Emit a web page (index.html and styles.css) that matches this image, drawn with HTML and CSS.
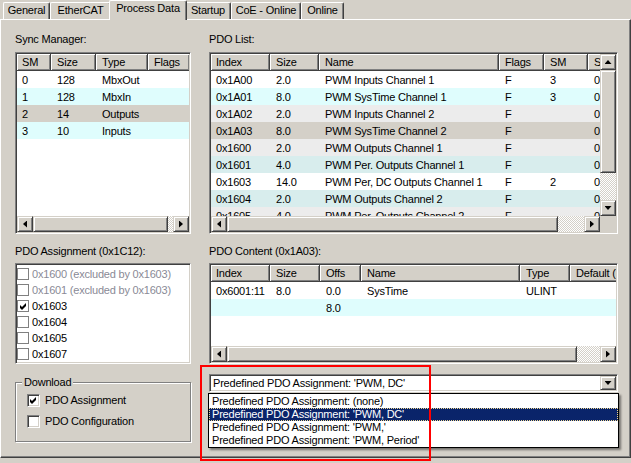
FILE: index.html
```html
<!DOCTYPE html>
<html>
<head>
<meta charset="utf-8">
<link rel="stylesheet" href="styles.css">
</head>
<body>
<div class="tabs">
  <div class="tab t1">General</div>
  <div class="tab t2">EtherCAT</div>
  <div class="tab t3 active">Process Data</div>
  <div class="tab t4">Startup</div>
  <div class="tab t5">CoE - Online</div>
  <div class="tab t6">Online</div>
</div>
<div class="panel">
  <div class="col left">
    <div class="label">Sync Manager:</div>
    <div class="sunken box big nov">
      <div class="view">
        <table class="lv sm-t">
          <colgroup><col class="c34"><col class="c45"><col class="c52"><col class="c42"><col class="c47"></colgroup>
          <tr><th>SM</th><th>Size</th><th>Type</th><th>Flags</th><th></th></tr>
          <tr class="r-w"><td>0</td><td>128</td><td>MbxOut</td><td></td><td></td></tr>
          <tr class="r-c"><td>1</td><td>128</td><td>MbxIn</td><td></td><td></td></tr>
          <tr class="r-s"><td>2</td><td>14</td><td>Outputs</td><td></td><td></td></tr>
          <tr class="r-c"><td>3</td><td>10</td><td>Inputs</td><td></td><td></td></tr>
        </table>
      </div>
      <div class="hscroll hs-sm"><div class="btn a-left"></div><div class="thumb"></div><div class="track"></div><div class="btn a-right"></div></div>
    </div>
    <div class="label l2">PDO Assignment (0x1C12):</div>
    <div class="sunken box small assign">
      <div class="item dis"><span class="cb"></span>0x1600 (excluded by 0x1603)</div>
      <div class="item dis"><span class="cb"></span>0x1601 (excluded by 0x1603)</div>
      <div class="item"><span class="cb"><svg width="7" height="7" viewBox="0 0 7 7"><polygon points="0,2 2,4 6,0 6,3 2,7 0,5"/></svg></span>0x1603</div>
      <div class="item"><span class="cb"></span>0x1604</div>
      <div class="item"><span class="cb"></span>0x1605</div>
      <div class="item"><span class="cb"></span>0x1607</div>
    </div>
    <div class="group">
      <div class="legend">Download</div>
      <div class="chk first"><span class="cb3d"><svg width="7" height="7" viewBox="0 0 7 7"><polygon points="0,2 2,4 6,0 6,3 2,7 0,5"/></svg></span>PDO Assignment</div>
      <div class="chk"><span class="cb3d"></span>PDO Configuration</div>
    </div>
  </div>
  <div class="col right">
    <div class="label">PDO List:</div>
    <div class="sunken box big withv">
      <div class="view">
        <table class="lv pdo-t">
          <colgroup><col class="c59"><col class="c49"><col class="c180"><col class="c45"><col class="c44"><col class="c42"></colgroup>
          <tr><th>Index</th><th>Size</th><th>Name</th><th>Flags</th><th>SM</th><th>SU</th></tr>
          <tr class="r-w"><td>0x1A00</td><td>2.0</td><td>PWM Inputs Channel 1</td><td>F</td><td>3</td><td>0</td></tr>
          <tr class="r-c"><td>0x1A01</td><td>8.0</td><td>PWM SysTime Channel 1</td><td>F</td><td>3</td><td>0</td></tr>
          <tr class="r-g"><td>0x1A02</td><td>2.0</td><td>PWM Inputs Channel 2</td><td>F</td><td></td><td>0</td></tr>
          <tr class="r-s"><td>0x1A03</td><td>8.0</td><td>PWM SysTime Channel 2</td><td>F</td><td></td><td>0</td></tr>
          <tr class="r-g"><td>0x1600</td><td>2.0</td><td>PWM Outputs Channel 1</td><td>F</td><td></td><td>0</td></tr>
          <tr class="r-d"><td>0x1601</td><td>4.0</td><td>PWM Per. Outputs Channel 1</td><td>F</td><td></td><td>0</td></tr>
          <tr class="r-w"><td>0x1603</td><td>14.0</td><td>PWM Per, DC Outputs Channel 1</td><td>F</td><td>2</td><td>0</td></tr>
          <tr class="r-d"><td>0x1604</td><td>2.0</td><td>PWM Outputs Channel 2</td><td>F</td><td></td><td>0</td></tr>
          <tr class="r-g"><td>0x1605</td><td>4.0</td><td>PWM Per. Outputs Channel 2</td><td>F</td><td></td><td>0</td></tr>
        </table>
      </div>
      <div class="vscroll"><div class="btn a-up"></div><div class="thumb"></div><div class="track"></div><div class="btn a-down"></div></div>
      <div class="hscroll hs-pdo"><div class="btn a-left"></div><div class="thumb"></div><div class="track"></div><div class="btn a-right"></div></div>
      <div class="corner"></div>
    </div>
    <div class="label l2">PDO Content (0x1A03):</div>
    <div class="sunken box small nov">
      <div class="view">
        <table class="lv cont-t">
          <colgroup><col class="c59"><col class="c50"><col class="c41"><col class="c159"><col class="c50"><col class="c80"></colgroup>
          <tr><th>Index</th><th>Size</th><th>Offs</th><th>Name</th><th>Type</th><th>Default (hex)</th></tr>
          <tr class="r-w"><td>0x6001:11</td><td>8.0</td><td>0.0</td><td>SysTime</td><td>ULINT</td><td></td></tr>
          <tr class="r-c"><td></td><td></td><td>8.0</td><td></td><td></td><td></td></tr>
        </table>
      </div>
      <div class="hscroll hs-cont"><div class="btn a-left"></div><div class="thumb"></div><div class="track"></div><div class="btn a-right"></div></div>
    </div>
    <div class="sunken combo">
      <div class="combo-text">Predefined PDO Assignment: 'PWM, DC'</div>
      <div class="btn a-down"></div>
    </div>
  </div>
</div>
<div class="dropdown">
  <div class="opt">Predefined PDO Assignment: (none)</div>
  <div class="opt sel">Predefined PDO Assignment: 'PWM, DC'</div>
  <div class="opt">Predefined PDO Assignment: 'PWM,'</div>
  <div class="opt">Predefined PDO Assignment: 'PWM, Period'</div>
</div>
<div class="highlight"></div>
</body>
</html>
```
FILE: styles.css
```css
* { box-sizing: border-box; }
html, body { margin: 0; }
body {
  background: #d4d0c8;
  font: 11px/13px "Liberation Sans", Arial, sans-serif;
  letter-spacing: -0.2px;
  color: #000;
  width: 631px;
  height: 463px;
  overflow: hidden;
}

/* Tabs */
.tabs { display: flex; align-items: flex-end; height: 19px; padding-left: 3px; }
.tab {
  height: 17px;
  border: 1px solid #fff;
  border-right-color: #404040;
  border-bottom: none;
  border-radius: 2px 2px 0 0;
  box-shadow: inset -1px 0 #808080;
  text-align: center;
  line-height: 15px;
  background: #d4d0c8;
}
.tab.active {
  height: 20px;
  margin: 0 -2px -1px;
  position: relative;
  z-index: 1;
  line-height: 15px;
}
.t1 { width: 47px; }
.t2 { width: 61px; }
.t3 { width: 78px; }
.t4 { width: 46px; }
.t5 { width: 70px; }
.t6 { width: 43px; }

/* Panel */
.panel {
  height: 439px;
  border: 1px solid #fff;
  border-right-color: #404040;
  border-bottom-color: #404040;
  box-shadow: inset -1px -1px #808080;
  display: flex;
  gap: 18px;
  padding: 13px 0 0 14px;
}
.col { display: flex; flex-direction: column; }
.col.left { width: 176px; }
.col.right { width: 409px; }
.label { height: 19px; white-space: nowrap; }
.label.l2 { height: 18px; margin-top: 11px; }

.sunken {
  border: 1px solid;
  border-color: #808080 #fff #fff #808080;
  box-shadow: inset 1px 1px #404040, inset -1px -1px #d4d0c8;
  padding: 1px;
  background: #fff;
}
.box.big { height: 182px; }
.box.small { height: 101px; }
.box.nov { display: grid; grid-template-columns: 1fr; grid-template-rows: 1fr 16px; }
.box.withv { display: grid; grid-template-columns: 1fr 16px; grid-template-rows: 1fr 16px; }
.view { overflow: hidden; min-width: 0; min-height: 0; }

/* List views */
.lv { border-collapse: separate; border-spacing: 0; table-layout: fixed; }
.sm-t { width: 220px; }
.pdo-t { width: 419px; }
.cont-t { width: 439px; }
.c34 { width: 34px; } .c45 { width: 45px; } .c52 { width: 52px; } .c42 { width: 42px; }
.c47 { width: 47px; } .c59 { width: 59px; } .c49 { width: 49px; } .c180 { width: 180px; }
.c44 { width: 44px; } .c50 { width: 50px; } .c41 { width: 41px; } .c159 { width: 159px; }
.c80 { width: 80px; }
.lv th, .lv td {
  height: 17px;
  padding: 0 0 0 6px;
  white-space: nowrap;
  overflow: hidden;
  text-align: left;
  font-weight: normal;
  line-height: 16px;
}
.lv th {
  background: #d4d0c8;
  border-right: 1px solid #404040;
  border-bottom: 1px solid #404040;
  box-shadow: inset 1px 1px #fff, inset -1px -1px #808080;
}
.lv th:first-child, .lv td:first-child { padding-left: 5px; }
.r-w { background: #fff; }
.r-c { background: #dffdfd; }
.r-g { background: #ececec; }
.r-s { background: #d4d0c8; }
.r-d { background: #d8eded; }

/* Scrollbars */
.hscroll { display: flex; height: 16px; }
.vscroll { display: flex; flex-direction: column; width: 16px; }
.btn, .thumb {
  background: #d4d0c8;
  border: 1px solid;
  border-color: #d4d0c8 #404040 #404040 #d4d0c8;
  box-shadow: inset 1px 1px #fff, inset -1px -1px #808080;
  display: flex;
  align-items: center;
  justify-content: center;
  flex: none;
}
.btn { width: 16px; height: 16px; }
.track {
  flex: 1;
  background: repeating-conic-gradient(#fff 0 25%, #d4d0c8 0 50%) 0 0 / 2px 2px;
}
.hs-sm .thumb { width: 135px; }
.hs-pdo .thumb { width: 331px; }
.hs-cont .thumb { width: 350px; }
.vscroll .thumb { height: 103px; width: 16px; }
.corner { background: #d4d0c8; }
.btn::before { content: ""; background: #000; display: block; }
.a-up::before { width: 7px; height: 4px; clip-path: polygon(50% 0, 100% 100%, 0 100%); }
.a-down::before { width: 7px; height: 4px; clip-path: polygon(0 0, 100% 0, 50% 100%); }
.a-left::before { width: 4px; height: 7px; clip-path: polygon(100% 0, 100% 100%, 0 50%); }
.a-right::before { width: 4px; height: 7px; clip-path: polygon(0 0, 100% 50%, 0 100%); }

/* Assignment list */
.assign { display: flex; flex-direction: column; }
.item { height: 16px; display: flex; align-items: center; white-space: nowrap; padding-top: 2px; }
.item.dis { color: #8a8a96; }
.cb {
  width: 12px; height: 12px;
  border: 1px solid #808080;
  background: #fff;
  margin-right: 3px;
  display: flex; align-items: center; justify-content: center;
}

/* Download group */
.group {
  margin-top: 18px;
  height: 60px;
  border: 1px solid #808080;
  box-shadow: inset 1px 1px #fff, 1px 1px #fff;
  padding: 0 0 0 11px;
}
.legend {
  margin: -7px 0 0 -5px;
  padding: 0 2px;
  width: max-content;
  background: #d4d0c8;
}
.chk { display: flex; align-items: center; height: 13px; margin-top: 8px; }
.chk.first { margin-top: 5px; }
.cb3d {
  width: 13px; height: 13px;
  border: 1px solid;
  border-color: #808080 #fff #fff #808080;
  box-shadow: inset 1px 1px #404040, inset -1px -1px #d4d0c8;
  background: #fff;
  margin-right: 5px;
  display: flex; align-items: center; justify-content: center;
}

/* Combo */
.combo { margin-top: 10px; height: 18px; display: flex; align-items: center; }
.combo-text { flex: 1; padding-left: 2px; white-space: nowrap; }
.combo .btn { height: 14px; width: 16px; }

/* Dropdown overlay */
.dropdown {
  position: absolute;
  left: 208px;
  top: 393px;
  width: 411px;
  border: 1px solid #000;
  background: #fff;
  padding-top: 1px;
  box-shadow: 2px 2px 2px rgba(0, 0, 0, 0.45);
}
.opt { height: 13px; line-height: 13px; padding-left: 3px; white-space: nowrap; }
.opt.sel { background: #0a246a; color: #fff; outline: 1px dotted #f0d890; outline-offset: -1px; }

.highlight {
  position: absolute;
  left: 200px;
  top: 365px;
  width: 231px;
  height: 96px;
  border: 2px solid #f00;
}
```
